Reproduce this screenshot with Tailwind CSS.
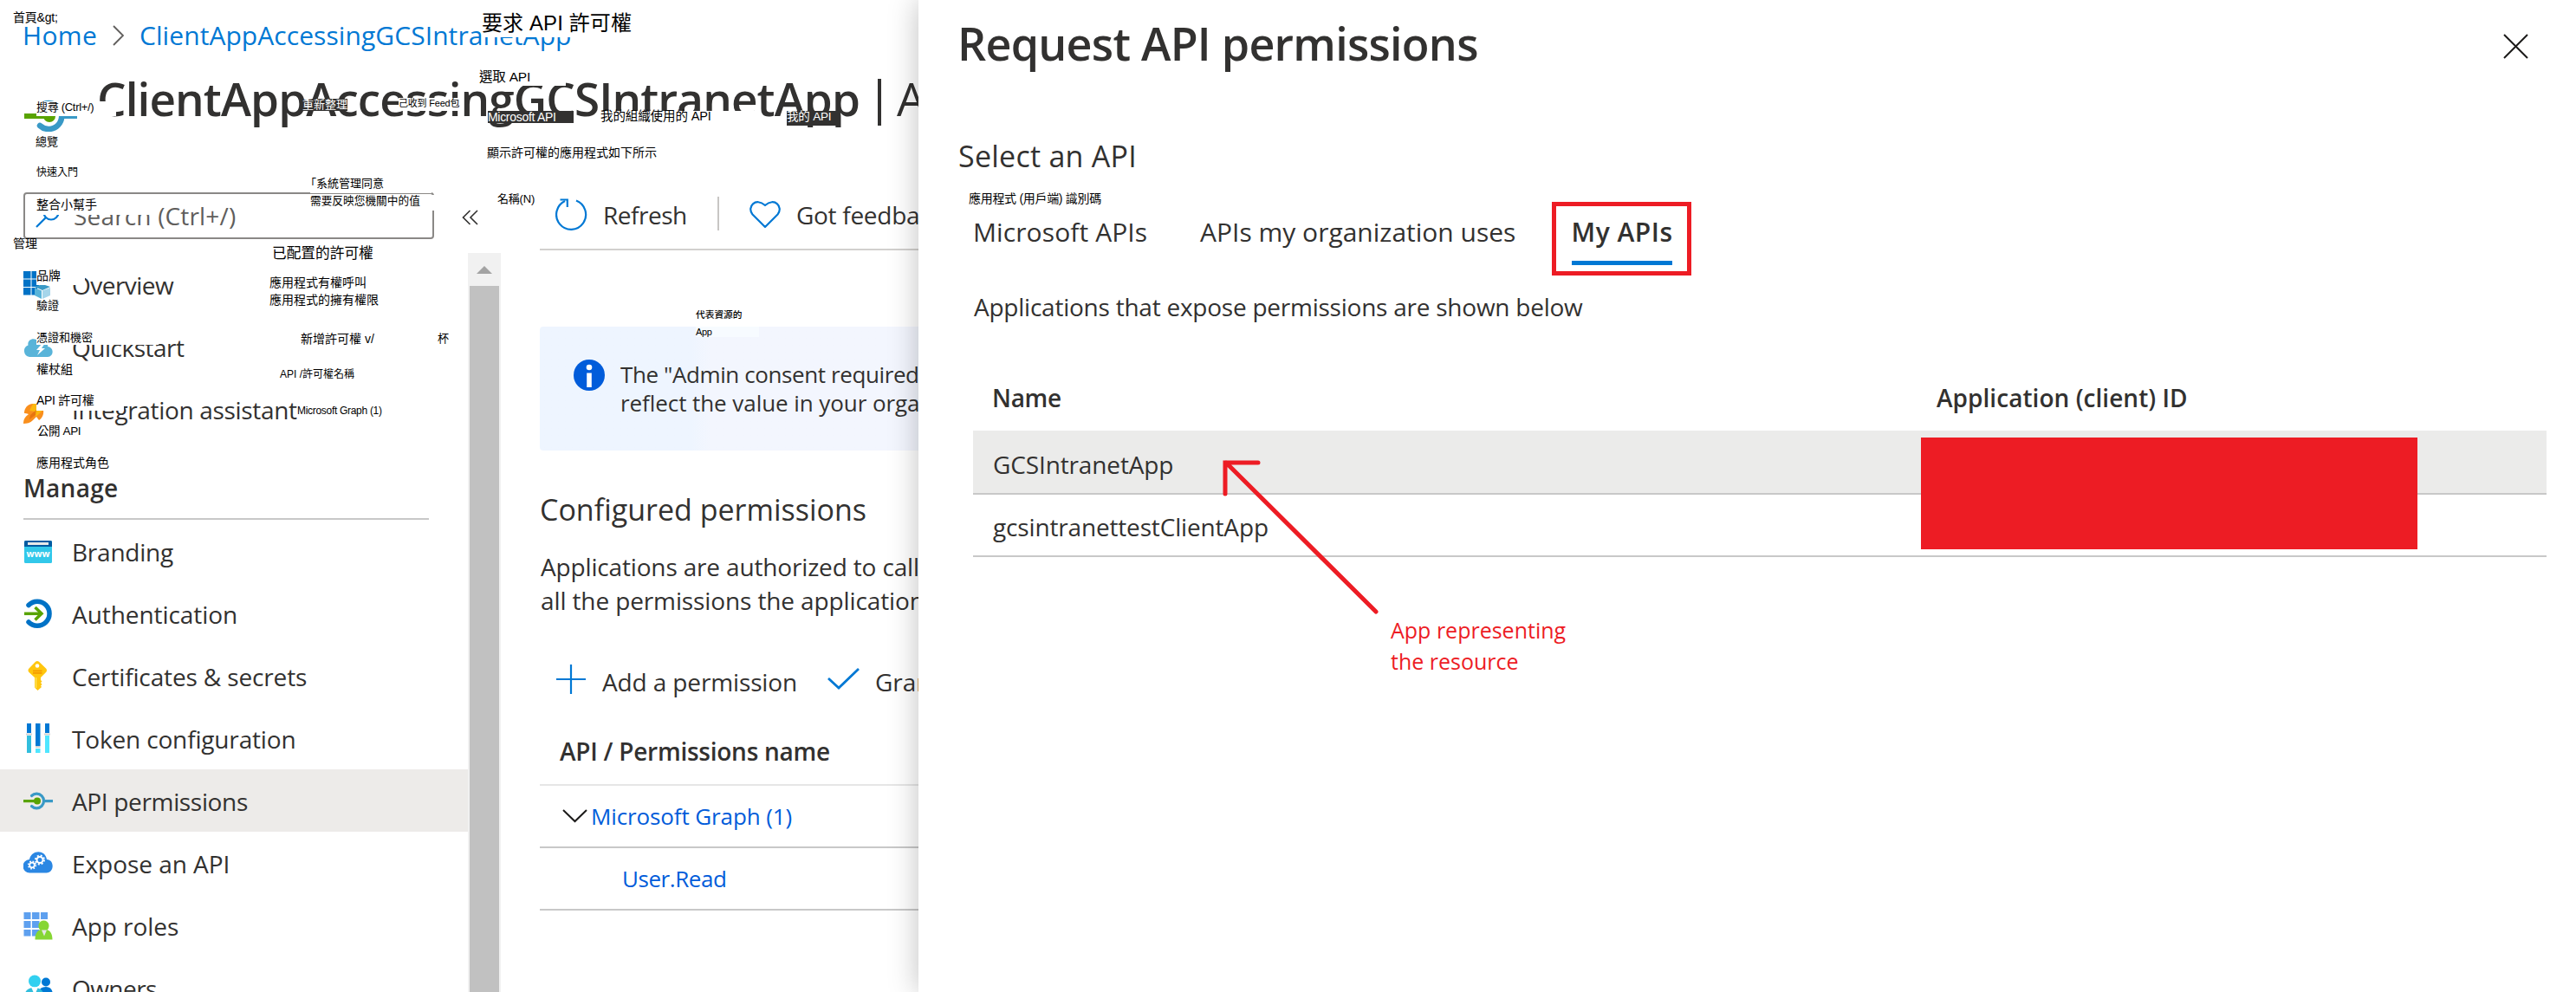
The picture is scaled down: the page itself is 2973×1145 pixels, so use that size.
<!DOCTYPE html>
<html lang="zh-Hant">
<head>
<meta charset="utf-8">
<title>Request API permissions</title>
<script src="https://cdn.jsdelivr.net/npm/@tailwindcss/browser@4"></script>
</head>
<body class="bg-white">
<div class="relative flex h-[1145px] w-[2973px] overflow-hidden bg-white font-['Open_Sans',sans-serif] text-[28px] text-[#323130]">

  <!-- Portal page behind the panel -->
  <div class="flex h-[1145px] w-[1060px] shrink-0 flex-col overflow-hidden whitespace-nowrap">
    <nav class="mt-[21px] flex h-10 shrink-0 items-center pl-[26px] text-[30px] leading-10 text-[#0078d4]">
      <a class="w-[104px] tracking-[0.35px]">Home</a>
      <svg class="mr-[18px] h-6 w-[13px]" viewBox="0 0 13 24" fill="none" stroke="#605e5c" stroke-width="1.8"><path d="M1 1l11 11L1 23"/></svg>
      <a class="tracking-[0.07px]">ClientAppAccessingGCSIntranetApp</a>
    </nav>
    <header class="mt-[15px] flex h-[72px] shrink-0 items-center pl-[27px] text-[53px] leading-[72px]">
      <svg class="mt-[40px] mr-[23px] h-[40px] w-[62px] shrink-0" viewBox="0 0 62 40">
        <path d="M19 11A15 15 0 1 1 19 33" fill="none" stroke="#3999c6" stroke-width="6.5" stroke-linecap="round"/>
        <path d="M44 19h18v6H44z" fill="#3999c6"/><path d="M1 19h26v6H1z" fill="#59a300"/><circle cx="30" cy="22" r="7" fill="#59a300"/>
      </svg>
      <h1 class="w-[901px] shrink-0 pt-1 font-semibold tracking-[-0.9px]">ClientAppAccessingGCSIntranetApp</h1>
      <span class="mt-3 mr-[8px] h-[54px] w-[4px] shrink-0 bg-[#323130]"></span>
      <span class="shrink-0 pt-1 pl-[10px]">API permissions</span>
    </header>

    <div class="flex grow">
      <!-- Resource menu -->
      <aside class="w-[540px] shrink-0">
        <div class="flex h-[144px] pt-[74px]">
          <div class="ml-[27px] flex h-[54px] w-[474px] shrink-0 items-center rounded border-2 border-[#8a8886] pl-[12px] text-[#605e5c]">
            <svg class="mr-[16px] h-[28px] w-[28px]" viewBox="0 0 28 28" fill="none" stroke="#0078d4" stroke-width="2.2"><circle cx="18" cy="10" r="8.500"/><path d="M12 16L1 27"/></svg>
            <span class="leading-10 tracking-[0.17px]">Search (Ctrl+/)</span>
          </div>
          <svg class="mt-[20px] ml-[32px] h-[18px] w-[19px] shrink-0" viewBox="0 0 19 18" fill="none" stroke="#323130" stroke-width="1.6"><path d="M9.500 1L1.500 9l8 8M18 1l-8 8 8 8"/></svg>
        </div>
        <div class="flex h-[72px] items-center pl-[27px]">
          <svg class="mr-[22px] h-[34px] w-[34px]" viewBox="0 0 34 34"><path d="M0 2h8.500v8.500H0zM9.500 2H18v8.500H9.500zM19 2h9v8.500h-9zM0 11.500h8.500V20H0zM9.500 11.500H18V20H9.500zM0 21h8.500v8.500H0zM9.500 21H16v8.500H9.500z" fill="#0072c6"/><path d="M13 20l9-3 9 3-9 4z" fill="#3999c6"/><path d="M13 21l8 3.500V34l-8-4z" fill="#59b4d9"/><path d="M31 21l-9 3.500V34l9-4z" fill="#a5d5ea"/></svg>
          <span class="pt-0.5 leading-10 tracking-[-0.53px]">Overview</span>
        </div>
        <div class="flex h-[72px] items-center pl-[27px]">
          <svg class="mr-[22px] h-[34px] w-[34px]" viewBox="0 0 34 34"><path d="M7 29a7 7 0 0 1-1.500-13.500C4 9 13 5 18 12c6-4 11 0 10 5 8 1 7 12 0 12z" fill="#59b4d9"/><path d="M22 13l-7 8h4l-3 6 9-8h-4l4-6z" fill="#fff"/></svg>
          <span class="pt-0.5 leading-10 tracking-[-0.5px]">Quickstart</span>
        </div>
        <div class="flex h-[72px] items-center pl-[27px]">
          <svg class="mr-[22px] h-[34px] w-[34px]" viewBox="0 0 34 34"><path d="M1 22C1 16 5 11 11 11l5 1 5-4 3 6-1 4c1 6-2 10-5 12l-3-4-4 4c-3 3-7 4-11 4 0-5 2-8 6-11-2-1-4-1-5-1z" fill="#f98f1d"/><path d="M11 11h5l8 5-5 6-5 4-1-6-6-1z" fill="#fbb80f"/><path d="M8 24l7-6-1 6-7 5z" fill="#e06a0a" opacity=".7"/></svg>
          <span class="pt-0.5 leading-10 tracking-[-0.33px]">Integration assistant</span>
        </div>
        <div class="ml-[27px] h-[92px] w-[468px] border-b-2 border-[#c8c8c8] pt-[35px] leading-10 font-semibold tracking-[0.28px]">Manage</div>
        <div class="flex h-[72px] items-center pl-[27px]">
          <svg class="mr-[22px] h-[34px] w-[34px]" viewBox="0 0 34 34"><rect x="1" y="5" width="32" height="26" rx="1.500" fill="#32c8ea"/><path d="M1 12V6.500Q1 5 2.500 5h29Q33 5 33 6.500V12z" fill="#005ba1"/><path d="M5 7h24v3H5z" fill="#e8e8e8"/><text x="17" y="24" text-anchor="middle" font-family="Open Sans" font-weight="700" font-size="10.500" fill="#fff">www</text></svg>
          <span class="pt-0.5 leading-10 tracking-[-0.23px]">Branding</span>
        </div>
        <div class="flex h-[72px] items-center pl-[27px]">
          <svg class="mr-[22px] h-[34px] w-[34px]" viewBox="0 0 34 34" fill="none"><path d="M6 7.500A14 14 0 1 1 6 27" stroke="#0072c6" stroke-width="5.500" stroke-linecap="round"/><path d="M1 17.300h20" stroke="#59a300" stroke-width="3.500"/><path d="M13.500 10l7.500 7.300-7.500 7.300" stroke="#59a300" stroke-width="3.500"/></svg>
          <span class="pt-0.5 leading-10 tracking-[-0.06px]">Authentication</span>
        </div>
        <div class="flex h-[72px] items-center pl-[27px]">
          <svg class="mr-[22px] h-[34px] w-[34px]" viewBox="0 0 34 34"><path d="M14 .8q2-1.500 4 0l8 7.700q2 2 0 4.500L20 19v3l1.500 1.500L20 25l1.500 2-1.500 1.500 1 1.500-4.500 4-3.500-3.500V19l-6.500-6q-2-2.500 0-4.500z" fill="#ffc60e"/><path d="M11 10.500h10.500v1.800H11zM11 13h10.500v1.800H11z" fill="#f59b00"/><circle cx="16" cy="5.500" r="2.300" fill="#fff"/><path d="M14.500 19v12" stroke="#ffe45c" stroke-width="1.500"/></svg>
          <span class="pt-0.5 leading-10 tracking-[-0.14px]">Certificates &amp; secrets</span>
        </div>
        <div class="flex h-[72px] items-center pl-[27px]">
          <svg class="mr-[22px] h-[34px] w-[34px]" viewBox="0 0 34 34"><path d="M4 0h5v11H4zM14 0h5.500v26H14zM25 0h5v11h-5z" fill="#0078d4"/><path d="M3 11.500h7v2H3zM24 11.500h7v2h-7zM14 26h5.500v2H14z" fill="#d2d2d2"/><path d="M4 14h5v20H4z" fill="#32bedd"/><path d="M25 14h5v20h-5zM14 29h5.500v5H14z" fill="#50e6ff"/></svg>
          <span class="pt-0.5 leading-10 tracking-[-0.16px]">Token configuration</span>
        </div>
        <div class="flex h-[72px] items-center bg-[#edebe9] pl-[27px]">
          <svg class="mr-[22px] h-[34px] w-[34px]" viewBox="0 0 34 34"><path d="M9.500 11.500A8.300 8.300 0 1 1 9.500 23.500" fill="none" stroke="#3999c6" stroke-width="3.200" stroke-linecap="round"/><path d="M24 16h10v3.200H24z" fill="#3999c6"/><path d="M0 16h16v3.200H0z" fill="#59a300"/><circle cx="16" cy="17.500" r="4" fill="#59a300"/></svg>
          <span class="pt-0.5 leading-10 tracking-[-0.34px]">API permissions</span>
        </div>
        <div class="flex h-[72px] items-center pl-[27px]">
          <svg class="mr-[22px] h-[34px] w-[34px]" viewBox="0 0 34 34"><path d="M7.500 28.500A7.500 7.500 0 0 1 7 13C9 2 25 1 27 13c9 0 9 15.500-.5 15.500z" fill="#2b87e3"/><circle cx="19" cy="13.500" r="3.500" fill="none" stroke="#fff" stroke-width="2"/><circle cx="19" cy="13.500" r="5" fill="none" stroke="#fff" stroke-width="2" stroke-dasharray="1.970"/><circle cx="10" cy="19.500" r="2.800" fill="none" stroke="#fff" stroke-width="1.800"/><circle cx="10" cy="19.500" r="4.300" fill="none" stroke="#fff" stroke-width="1.600" stroke-dasharray="1.690"/></svg>
          <span class="pt-0.5 leading-10 tracking-[-0.05px]">Expose an API</span>
        </div>
        <div class="flex h-[72px] items-center pl-[27px]">
          <svg class="mr-[22px] h-[34px] w-[34px]" viewBox="0 0 34 34"><path d="M.5 2H8.500v8H.5zM10 2h8.500v8H10zM20 2h8v8h-8zM.5 12H8.500v8H.5zM10 12h8.500v8H10zM.5 22H8.500v7.500H.5zM10 22h8.500v7.500H10z" fill="#5ea0ef"/><path d="M13.500 33.500c0-7 3-11 6-11-4-4-2-11 4-11s8 7 4 11c3 0 6 4 6 11z" fill="#86d633"/><path d="M21 22.500h6l-3 7z" fill="#e6e7e8"/></svg>
          <span class="pt-0.5 leading-10 tracking-[-0.04px]">App roles</span>
        </div>
        <div class="flex h-[72px] items-center pl-[27px]">
          <svg class="mr-[22px] h-[34px] w-[34px]" viewBox="0 0 34 34"><circle cx="26" cy="10.500" r="5" fill="#0078d4"/><path d="M17 26q0-10 9-10 8 0 8 10z" fill="#0078d4"/><path d="M1 29q0-12 11.500-12T24 29z" fill="#32bedd"/><circle cx="13" cy="9.500" r="7" fill="#32d0f0"/><path d="M9 16.500h8l-4 9z" fill="#fff"/></svg>
          <span class="pt-0.5 leading-10 tracking-[-0.56px]">Owners</span>
        </div>
      </aside>

      <!-- Scrollbar -->
      <div class="mt-[144px] flex h-[853px] w-[38px] shrink-0 flex-col items-center bg-[#f1f1f1]">
        <svg class="mt-[15px] mb-[14px] h-[9px] w-[18px] shrink-0" viewBox="0 0 18 9"><path d="M9 0l9 9H0z" fill="#a3a3a3"/></svg>
        <div class="w-[34px] grow bg-[#c1c1c1]"></div>
      </div>

      <!-- Main content -->
      <main class="ml-[45px] w-[437px] shrink-0 overflow-hidden">
        <div class="flex h-[141px] items-center border-b-2 border-[#d2d0ce] pt-[58px] pl-[18px]">
          <svg class="mr-[17px] h-[38px] w-[38px] shrink-0" viewBox="0 0 38 38" fill="none" stroke="#0078d4" stroke-width="2.200"><path d="M24 3.500A17 17.200 0 1 1 11 4"/><path d="M5.500 2.500h8.300v8.500"/></svg>
          <span class="w-[132px] shrink-0 pt-[3px] leading-10 tracking-[-0.49px]">Refresh</span>
          <span class="mr-[34px] h-[39px] w-[2px] shrink-0 bg-[#c8c6c4]"></span>
          <svg class="mr-[17px] h-[34px] w-[38px] shrink-0" viewBox="0 0 38 34" fill="none" stroke="#0078d4" stroke-width="2.200" stroke-linejoin="round"><path d="M19 32L4.500 17.500C-2.500 9 8-3 19 7 30-3 40.500 9 33.500 17.500z"/></svg>
          <span class="shrink-0 pt-[3px] leading-10 tracking-[-0.29px]">Got feedback?</span>
        </div>
        <div class="mt-[88px] flex h-[143px] rounded-l bg-linear-to-r from-[#eef5ff] from-40% to-[#f3f6fe] to-45% pt-[38px] pl-[39px] text-[26px] leading-[33px]">
          <svg class="mr-[18px] h-[36px] w-[36px] shrink-0" viewBox="0 0 36 36"><circle cx="18" cy="18" r="18" fill="#015cda"/><circle cx="18" cy="9" r="3.300" fill="#fff"/><path d="M15.200 15.500h5.600V32h-5.600z" fill="#fff"/></svg>
          <div class="shrink-0 pt-px"><p class="tracking-[-0.4px]">The "Admin consent required" column</p><p class="tracking-[-0.07px]">reflect the value in your organization</p></div>
        </div>
        <h2 class="mt-[46px] text-[34px] leading-[44px]">Configured permissions</h2>
        <div class="mt-[25px] pl-px leading-[39px]"><p class="tracking-[-0.16px]">Applications are authorized to call</p><p class="tracking-[-0.12px]">all the permissions the application</p></div>
        <div class="mt-[43px] flex h-[56px] items-center pl-[18px]">
          <svg class="mr-[18px] h-[36px] w-[36px] shrink-0" viewBox="0 0 36 36" stroke="#0078d4" stroke-width="2.200"><path d="M1 18h34M18 1v34"/></svg>
          <span class="w-[260px] shrink-0 pt-[5px] leading-10 tracking-[-0.13px]">Add a permission</span>
          <svg class="mr-[18px] h-[28px] w-[37px] shrink-0" viewBox="0 0 37 28" fill="none" stroke="#0078d4" stroke-width="2.800"><path d="M1 13l12 11L36 2"/></svg>
          <span class="shrink-0 pt-[5px] leading-10">Grant</span>
        </div>
        <div class="mt-[23px] h-[72px] border-b-2 border-[#e6e6e6] pt-1 pl-[23px] leading-[56px] font-semibold tracking-[-0.25px]">API / Permissions name</div>
        <div class="flex h-[72px] items-center border-b-2 border-[#c8c8c8] pl-[26px] text-[26px] text-[#015cda]">
          <svg class="mr-[4px] h-[16px] w-[29px]" viewBox="0 0 29 16" fill="none" stroke="#1b1a19" stroke-width="2"><path d="M1 1l13.500 13L28 1"/></svg>
          <span class="leading-10 tracking-[-0.12px]">Microsoft Graph (1)</span>
        </div>
        <div class="flex h-[72px] items-center border-b-2 border-[#c8c8c8] pl-[95px] text-[26px] text-[#015cda]"><span class="leading-10 tracking-[-0.44px]">User.Read</span></div>
      </main>
    </div>
  </div>

  <!-- Request API permissions panel -->
  <section class="relative h-[1145px] w-[1913px] shrink-0 bg-white whitespace-nowrap shadow-[0_0_32px_rgba(0,0,0,0.25)]">
    <div class="flex justify-between pt-[14px] pr-[55px] pl-[45px]">
      <h2 class="text-[52px] leading-[72px] font-semibold tracking-[-0.74px]">Request API permissions</h2>
      <svg class="mt-[25px] h-[29px] w-[29px]" viewBox="0 0 29 29" stroke="#1b1a19" stroke-width="2"><path d="M1 1l27 27M28 1L1 28"/></svg>
    </div>
    <h3 class="mt-[71px] pl-[46px] text-[34px] leading-[46px] tracking-[0.25px]">Select an API</h3>
    <div class="mt-[30px] flex h-[85px] items-center pl-[63px] text-[30px]">
      <span class="w-[262px] pb-[16px] leading-10 tracking-[0.1px]">Microsoft APIs</span>
      <span class="w-[406px] pb-[16px] leading-10">APIs my organization uses</span>
      <span class="flex h-[85px] w-[161px] flex-col items-center border-[5px] border-[#ed1c24] pt-[5px] font-semibold">
        <span class="pl-px leading-[50px] tracking-[0.5px]">My APIs</span>
        <span class="mt-2 h-[5px] w-[116px] bg-[#0078d4]"></span>
      </span>
    </div>
    <p class="mt-[16px] pl-[64px] leading-10 tracking-[-0.24px]">Applications that expose permissions are shown below</p>
    <div class="mt-[30px] ml-[63px] w-[1816px]">
      <div class="flex h-[93px] pt-[35px] leading-[40px] font-semibold"><span class="w-[1090px] pl-[22px] tracking-[-0.3px]">Name</span><span class="pl-[22px] tracking-[0.04px]">Application (client) ID</span></div>
      <div class="h-[74px] border-b-2 border-[#c8c8c8] bg-[#ebebea] pt-[3px] pl-[23px] leading-[72px] tracking-[-0.13px]">GCSIntranetApp</div>
      <div class="h-[72px] border-b-2 border-[#c8c8c8] pt-px pl-[23px] leading-[72px] tracking-[-0.16px]">gcsintranettestClientApp</div>
    </div>
    <div class="mt-[66px] pl-[545px] text-[25px] leading-[36px] text-[#ed1c24]"><p>App representing</p><p>the resource</p></div>
    <!-- Redaction and pointer drawn over the table -->
    <div class="absolute top-[505px] left-[1157px] h-[129px] w-[573px] bg-[#ed1c24]"></div>
    <svg class="absolute top-[520px] left-[340px] h-[200px] w-[200px]" viewBox="0 0 200 200" fill="none" stroke="#ed1c24" stroke-width="5" stroke-linecap="round"><path d="M14 50V14h38M15 14l173 172"/></svg>
  </section>

  <!-- Translated labels floating over the page -->
  <div class="absolute inset-0 font-['Liberation_Sans','Noto_Sans_CJK_TC',sans-serif] text-[14px] leading-[14px] whitespace-nowrap text-black [&>span]:absolute">
    <span class="top-[13px] left-[15px] tracking-[-0.2px]">首頁&amp;gt;</span>
    <span class="top-[117px] left-[42px] h-[17px] w-[92px] bg-white text-[13px] tracking-[-0.3px]">搜尋 (Ctrl+/)</span>
    <span class="top-[114px] left-[349px] h-[14px] w-[52px] bg-[#323130] text-[13px] leading-[13px] text-white">重新整理</span>
    <span class="top-[113px] left-[460px] h-[15px] w-[69px] bg-white text-[11px] leading-[13px] tracking-[-0.2px]">己收到 Feed包</span>
    <span class="top-[204px] left-[358px] h-[19px] w-[140px] bg-white pt-px -indent-1.5 text-[13px]">「系統管理同意</span>
    <span class="top-[225px] left-[358px] h-[18px] w-[146px] bg-white text-[12.700px]">需要反映您機關中的值</span>
    <span class="top-[157px] left-[41px] text-[13px]">總覽</span>
    <span class="top-[192px] left-[42px] text-[12px]">快速入門</span>
    <span class="top-[229px] left-[42px] h-[19px] w-[130px] bg-white">整合小幫手</span>
    <span class="top-[274px] left-[15px]">管理</span>
    <span class="top-[284px] left-[314px] text-[16.700px] leading-[17px]">已配置的許可權</span>
    <span class="top-[311px] left-[42px] h-[18px] w-[56px] bg-white">品牌</span>
    <span class="top-[319px] left-[311px]">應用程式有權呼叫</span>
    <span class="top-[339px] left-[311px]">應用程式的擁有權限</span>
    <span class="top-[346px] left-[42px] text-[13px]">驗證</span>
    <span class="top-[383px] left-[42px] h-[15px] w-[141px] bg-white text-[13px]">憑證和機密</span>
    <span class="top-[384px] left-[347px]">新增許可權 v/</span>
    <span class="top-[384px] left-[505px] text-[13px]">杯</span>
    <span class="top-[419px] left-[42px]">權杖組</span>
    <span class="top-[425px] left-[323px] text-[12px]">API /許可權名稱</span>
    <span class="top-[455px] left-[42px] h-[19px] w-[101px] bg-white tracking-[-0.3px]">API 許可權</span>
    <span class="top-[467px] left-[343px] text-[12px] tracking-[-0.3px]">Microsoft Graph (1)</span>
    <span class="top-[491px] left-[43px] text-[13.500px] tracking-[-0.4px]">公開 API</span>
    <span class="top-[527px] left-[42px]">應用程式角色</span>
    <span class="top-[13px] left-[556px] h-[30px] w-[180px] bg-white text-[24px] leading-[28px] tracking-[0.1px]">要求 API 許可權</span>
    <span class="top-[82px] left-[553px] h-[17px] w-[100px] bg-white text-[15.500px] tracking-[-0.2px]">選取 API</span>
    <span class="top-[128px] left-[563px] h-[14px] w-[99px] bg-[#323130] tracking-[-0.3px] text-white">Microsoft API</span>
    <span class="top-[128px] left-[693px] h-[14px] w-[180px] bg-white text-[14.500px] leading-[12px] tracking-[-0.1px]">我的組織使用的 API</span>
    <span class="top-[128px] left-[908px] h-[17px] w-[62px] bg-[#323130] text-[13.500px] leading-[13px] tracking-[-0.2px] text-white">我的 API</span>
    <span class="top-[169px] left-[562px]">顯示許可權的應用程式如下所示</span>
    <span class="top-[223px] left-[574px] text-[13px] tracking-[-0.2px]">名稱(N)</span>
    <span class="top-[356px] left-[803px] text-[10.700px] font-medium">代表資源的</span>
    <span class="top-[377px] left-[803px] h-[12px] w-[73px] bg-[#f7fbff] text-[11px] leading-[13px] tracking-[-0.3px]">App</span>
    <span class="top-[222px] left-[1118px] text-[14px] tracking-[-0.3px]">應用程式 (用戶端) 識別碼</span>
  </div>
</div>
</body>
</html>
